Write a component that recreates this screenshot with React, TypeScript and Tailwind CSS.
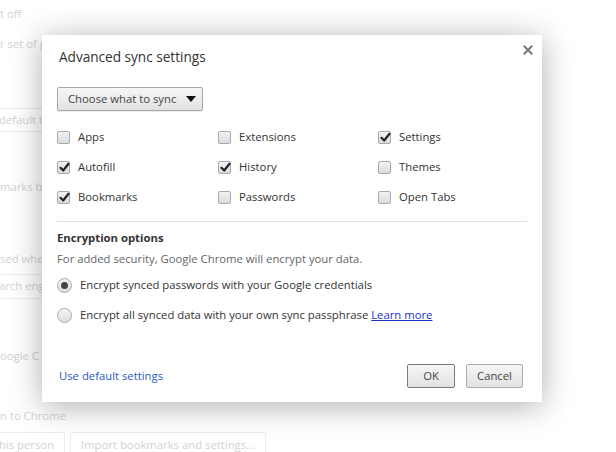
import React from "react";

const font = { fontFamily: '"Open Sans", "Noto Sans", sans-serif' };

function Check({ checked }: { checked?: boolean }) {
  return (
    <span className="relative flex h-[13px] w-[13px] shrink-0 items-center justify-center rounded-[2px] border border-[#a9a9a9] bg-gradient-to-b from-[#f2f2f2] to-[#dcdcdc]">
      {checked && (
        <svg width="11" height="11" viewBox="0 0 11 11" className="absolute left-[1px] top-0">
          <path d="M1.5 5.8 L4.2 8.5 L9.5 1.8" fill="none" stroke="#222" strokeWidth="2.2" strokeLinecap="round" strokeLinejoin="round" />
        </svg>
      )}
    </span>
  );
}

function CheckItem({ label, checked }: { label: string; checked?: boolean }) {
  return (
    <div className="flex h-[30px] items-center gap-[8px]">
      <Check checked={checked} />
      <span className="text-[#333]">{label}</span>
    </div>
  );
}

function Radio({ checked }: { checked?: boolean }) {
  return (
    <span className="flex h-[15px] w-[15px] shrink-0 items-center justify-center rounded-full border border-[#aaaaaa] bg-gradient-to-b from-[#f5f5f5] to-[#dedede]">
      {checked && <span className="h-[7px] w-[7px] rounded-full bg-[#444]" />}
    </span>
  );
}

export default function App() {
  return (
    <div className="relative h-[452px] w-[616px] overflow-hidden bg-white text-[11.3px]" style={font}>
      {/* faded background page */}
      <div className="flex flex-col text-[#d2d2d2]">
        <div className="mt-[5px] h-[18px] leading-[18px]">t off</div>
        <div className="mt-[12px] h-[18px] leading-[18px]">r set of p</div>
        <div className="mt-[55px] flex h-[24px] w-[124px] items-center rounded-[2px] border border-[#ececec] pl-[1px] -ml-[3px]">default t</div>
        <div className="mt-[46px] h-[18px] leading-[18px]">marks ba</div>
        <div className="mt-[54px] h-[18px] leading-[18px]">sed whe</div>
        <div className="mt-[6px] flex h-[25px] w-[130px] items-center rounded-[2px] border border-[#ececec] pl-[1px] -ml-[3px]">arch eng</div>
        <div className="mt-[48px] h-[18px] leading-[18px]">oogle C</div>
        <div className="mt-[42px] h-[18px] leading-[18px]">n to Chrome</div>
        <div className="mt-[7px] flex gap-[5px]">
          <div className="flex h-[26px] w-[68px] items-center rounded-[2px] border border-[#ececec] pl-[1px] -ml-[3px]">his person</div>
          <div className="flex h-[26px] items-center rounded-[2px] border border-[#ececec] px-[10px]">Import bookmarks and settings...</div>
        </div>
      </div>

      {/* dialog */}
      <div className="absolute left-[42px] top-[35px] flex h-[367px] w-[500px] flex-col bg-white pl-[15px] pr-[15px] shadow-[0_4px_30px_rgba(0,0,0,0.32)]">
        <div className="relative">
          <div className="mt-[12px] pl-[2px] text-[13.6px] leading-[20px] text-[#333]">Advanced sync settings</div>
          <svg width="10" height="10" viewBox="0 0 10 10" className="absolute right-[-6px] top-[10px]">
            <path d="M1.5 1.5 L8.5 8.5 M8.5 1.5 L1.5 8.5" stroke="#777" strokeWidth="2" strokeLinecap="square" />
          </svg>
        </div>

        <div className="mt-[20px] flex h-[24px] w-[146px] items-center justify-between rounded-[2px] border border-[#a8a8a8] bg-gradient-to-b from-[#f6f6f6] to-[#e2e2e2] pl-[10px] pr-[6px] text-[#444] shadow-[0_1px_0_rgba(0,0,0,0.08)]">
          <span>Choose what to sync</span>
          <svg width="10" height="6" viewBox="0 0 10 6"><path d="M0 0 H10 L5 6 Z" fill="#111" /></svg>
        </div>

        <div className="mt-[11px] grid grid-cols-[161px_160px_1fr]">
          <CheckItem label="Apps" />
          <CheckItem label="Extensions" />
          <CheckItem label="Settings" checked />
          <CheckItem label="Autofill" checked />
          <CheckItem label="History" checked />
          <CheckItem label="Themes" />
          <CheckItem label="Bookmarks" checked />
          <CheckItem label="Passwords" />
          <CheckItem label="Open Tabs" />
        </div>

        <div className="mt-[9px] h-px bg-[#e0e0e0]" />

        <div className="mt-[7px] h-[18px] font-bold leading-[18px] text-[#333]">Encryption options</div>
        <div className="mt-[3px] h-[18px] leading-[18px] text-[#666]">For added security, Google Chrome will encrypt your data.</div>

        <div className="mt-[7px] flex h-[20px] items-center gap-[8px] text-[#333]">
          <Radio checked />
          <span>Encrypt synced passwords with your Google credentials</span>
        </div>
        <div className="mt-[10px] flex h-[20px] items-center gap-[8px] text-[#333]">
          <Radio />
          <span>
            Encrypt all synced data with your own sync passphrase{" "}
            <span className="text-[#1a2fc8] underline">Learn more</span>
          </span>
        </div>

        <div className="mt-auto mb-[14px] flex items-center">
          <span className="ml-[2px] text-[#2a5bc4]">Use default settings</span>
          <div className="ml-auto mr-[4px] flex gap-[11px]">
            <div className="flex h-[24px] w-[48px] items-center justify-center rounded-[2px] border border-[#7a7a7a] bg-gradient-to-b from-[#f6f6f6] to-[#e2e2e2] text-[#444]">OK</div>
            <div className="flex h-[24px] w-[57px] items-center justify-center rounded-[2px] border border-[#ababab] bg-gradient-to-b from-[#f6f6f6] to-[#e2e2e2] text-[#444]">Cancel</div>
          </div>
        </div>
      </div>
    </div>
  );
}
